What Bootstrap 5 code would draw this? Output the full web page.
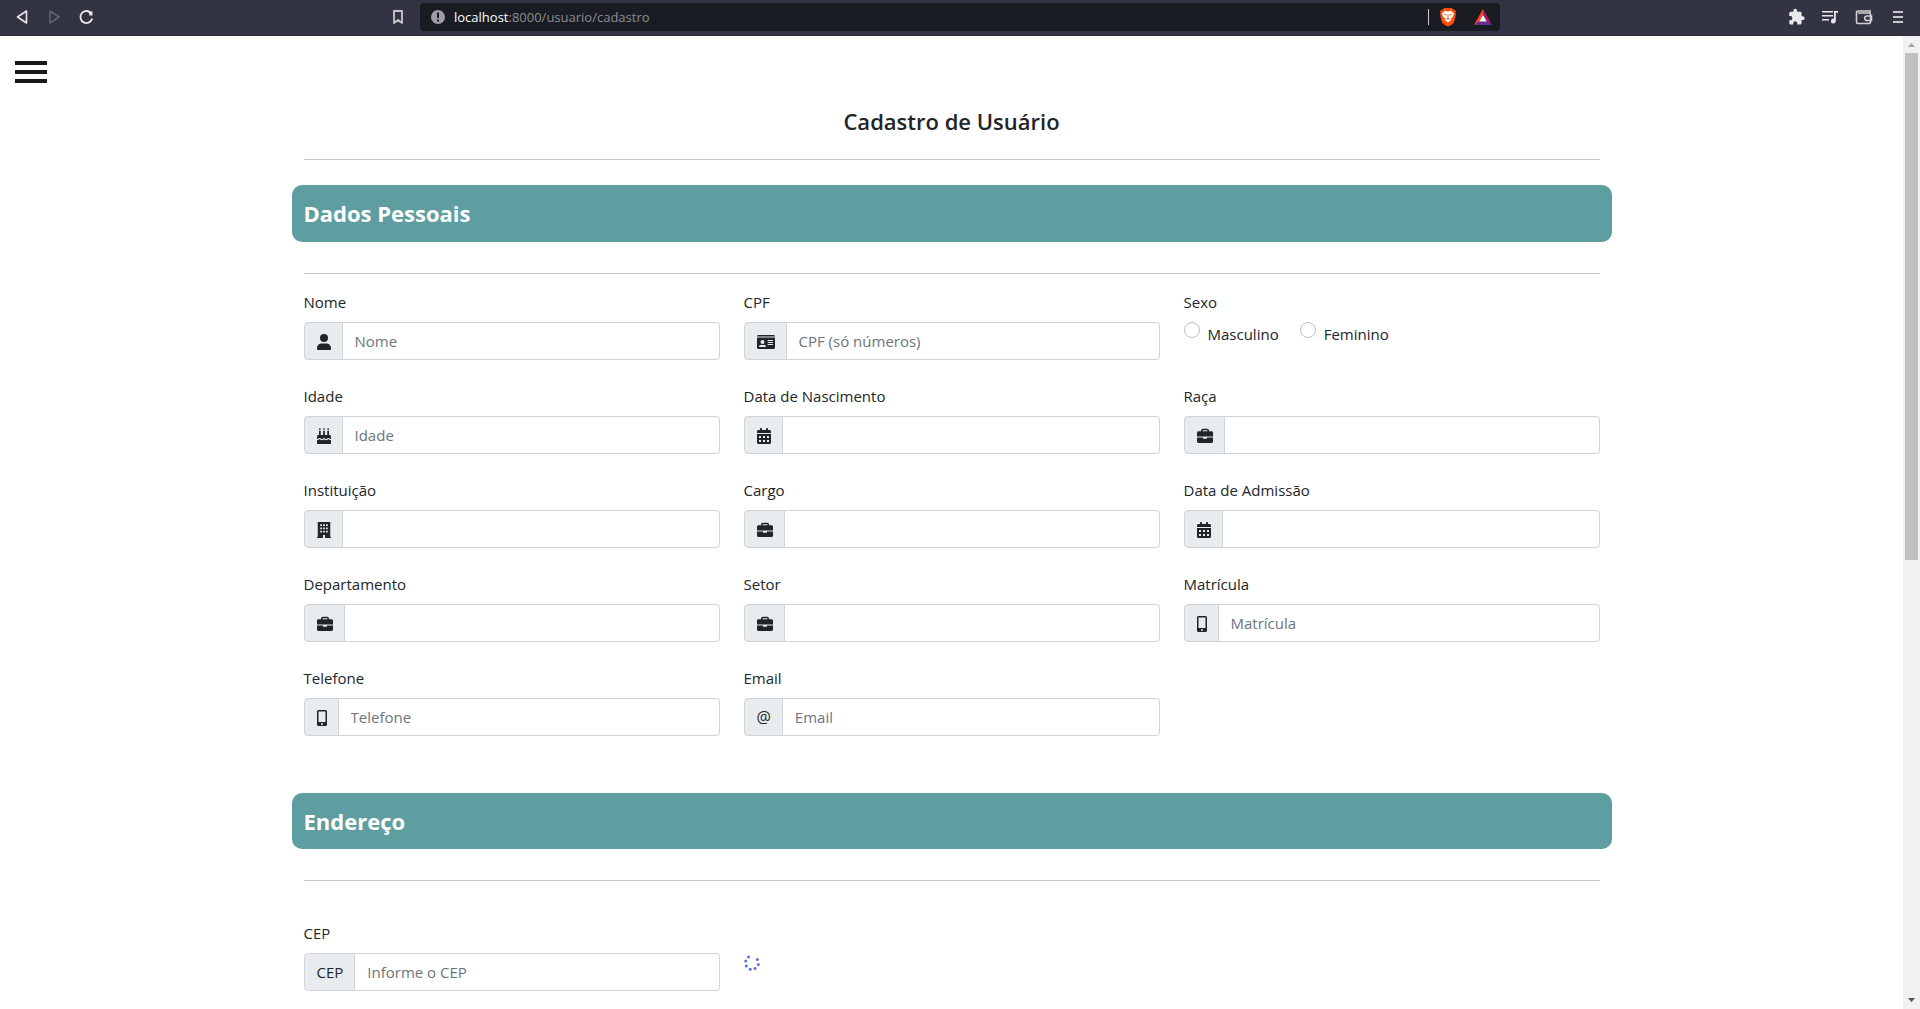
<!DOCTYPE html>
<html lang="pt-BR">
<head>
<meta charset="utf-8">
<meta name="viewport" content="width=device-width, initial-scale=1">
<title>Cadastro de Usuário</title>
<link href="https://cdn.jsdelivr.net/npm/bootstrap@5.3.0/dist/css/bootstrap.min.css" rel="stylesheet">
<style>
  body { font-family: "Open Sans", "Noto Sans", sans-serif; color: #212529; background: #fff; }
  .browser-bar { height: 36px; background: #323443; border-bottom: 1px solid #2b2c3b; padding-bottom: 1px; }
  .bar-btn { border: 0; background: none; padding: 0; color: #e8e8ea; display: flex; }
  .bar-left { width: 420px; padding-left: 14px; padding-right: 13px; }
  .bar-left .bar-btn { margin-right: 14px; }
  .bar-left .bar-btn:last-child { margin-right: 0; }
  .url-box { height: 28px; background: #191c23; border-radius: 4px; padding: 0 8px 0 10px; margin-right: 287px; }
  .url-host { color: #fff; }
  .url-text { font-size: 13px; line-height: 18px; color: #8c8e94; text-decoration: none; margin-left: 8px; }
  .url-sep { width: 1px; height: 16px; background: #c8c8ca; margin-right: 9px; }
  .bar-right { gap: 16px; padding-right: 13px; }
  .menu-btn { border: 0; background: none; padding: 25px 15px 0; display: block; }
  .menu-btn span { display: block; width: 32px; height: 4px; background: #1a1a1a; margin-bottom: 5px; }
  .menu-btn span:last-child { margin-bottom: 0; }
  .page-title { font-size: 22px; line-height: 29px; font-weight: 600; margin: 24px 0 0; }
  .rule { border: 0; border-top: 1px solid #c8c9ca; height: 0; opacity: 1; }
  .rule:not([size]) { height: 1px; background: none; }
  .title-rule { margin: 23px 0 25px; }
  .band-rule { margin: 31px 0 16px; }
  .section-band { background: #5f9ea0; color: #fff; border-radius: 10px; padding: 14px 12px; margin-left: -12px; margin-right: -12px; }
  .section-band h2 { font-size: 22px; line-height: 29px; font-weight: 700; margin: 0; }
  .address-band { margin-top: 57px; padding-bottom: 13px; }
  .address-fields { padding-top: 24px; }
  .loading-cell { padding-top: 34px; }
  .field-label { font-size: 15px; line-height: 24px; margin-bottom: 8px; display: block; }
  .input-group > .form-control, .input-group-text { font-size: 15px; line-height: 24px; color: #212529; border-color: #ced4da; }
  .input-group-text { background: #e9ecef; min-height: 38px; padding-right: 11px; }
  .input-group > .at-sign { font-size: 16px; }
  .form-control::placeholder { color: #6c757d; }
  .input-group > .form-control, .input-group > .input-group-text { border-radius: 4px; }
  .input-group > .input-group-text { border-top-right-radius: 0; border-bottom-right-radius: 0; }
  .input-group > .form-control { border-top-left-radius: 0; border-bottom-left-radius: 0; }
  .ico { fill: currentColor; height: 16px; display: block; margin-top: 2px; }
  .sex-option { gap: 8px; margin-right: 21px; }
  .sex-option .form-check-input { margin: 0; border-color: #bfbfbf; }
  .sex-option label { font-size: 15px; line-height: 24px; }
  .scroll-track { width: 17px; background: #f1f1f1; padding: 0 2px; }
  .scroll-end { height: 17px; }
  .scroll-thumb { height: 54%; background: #c1c1c1; }
</style>
<script src="https://cdn.jsdelivr.net/npm/bootstrap@5.3.0/dist/js/bootstrap.bundle.min.js"></script>
</head>
<body class="vh-100 d-flex flex-column overflow-hidden">

<svg class="d-none" xmlns="http://www.w3.org/2000/svg">
  <symbol id="i-user" viewBox="0 0 448 512"><path d="M224 256A128 128 0 1 0 224 0a128 128 0 0 0 0 256zM144 304C64 304 0 368 0 448v20c0 24 20 44 44 44h360c24 0 44-20 44-44v-20c0-80-64-144-144-144z"/></symbol>
  <symbol id="i-card" viewBox="0 0 576 512"><path fill-rule="evenodd" d="M0 80h576c0-27-21-48-48-48H48C21 32 0 53 0 80zm0 32v320c0 27 21 48 48 48h480c27 0 48-21 48-48V112zM64 405c0-29 24-53 53-53h118c29 0 53 24 53 53 0 6-5 11-11 11H75c-6 0-11-5-11-11zM176 192a64 64 0 1 1 0 128 64 64 0 0 1 0-128zm176 0h144a16 16 0 0 1 0 32H352a16 16 0 0 1 0-32zm0 64h144a16 16 0 0 1 0 32H352a16 16 0 0 1 0-32zm0 64h144a16 16 0 0 1 0 32H352a16 16 0 0 1 0-32z"/></symbol>
  <symbol id="i-cake" viewBox="0 0 448 512"><path d="M64 96v128H48c-27 0-48 21-48 48v80c20 0 30-8 44-18 24-18 52-18 76 0 30 22 44 22 74 0 20-14 40-14 60 0 30 22 44 22 74 0 24-18 52-18 76 0 14 10 24 18 44 18v-80c0-27-21-48-48-48h-16V96h-56v128h-76V96h-56v128h-76V96zM0 388v124h448V388c-28 0-46-8-62-20-14-9-26-9-40 0-44 30-72 30-112 0-8-6-14-6-22 0-40 30-68 30-112 0-14-9-26-9-40 0-16 12-32 20-60 20zM72 8h40v64H72zM204 8h40v64h-40zM336 8h40v64h-40z"/></symbol>
  <symbol id="i-calendar" viewBox="0 0 448 512"><path fill-rule="evenodd" d="M128 0c18 0 32 14 32 32v32h128V32a32 32 0 0 1 64 0v32h48c26 0 48 22 48 48v48H0v-48c0-26 22-48 48-48h48V32c0-18 14-32 32-32zM0 192h448v272c0 26-22 48-48 48H48c-26 0-48-22-48-48zm64 64v64h64v-64zm128 0v64h64v-64zm128 0v64h64v-64zM64 384v64h64v-64zm128 0v64h64v-64zm128 0v64h64v-64z"/></symbol>
  <symbol id="i-case" viewBox="0 0 512 512"><path fill-rule="evenodd" d="M184 72h144c4 0 8 4 8 8v24H176V80c0-4 4-8 8-8zm-56 8v24H48c-27 0-48 21-48 48v120h512V152c0-27-21-48-48-48h-80V80c0-31-25-56-56-56H184c-31 0-56 25-56 56zM512 304H320v24c0 9-7 16-16 16h-96c-9 0-16-7-16-16v-24H0v128c0 27 21 48 48 48h416c27 0 48-21 48-48z"/></symbol>
  <symbol id="i-building" viewBox="0 0 448 512"><path fill-rule="evenodd" d="M24 0h400v480h24v32H256v-96h-64v96H0v-32h24zM104 72v56h56V72zm92 0v56h56V72zm92 0v56h56V72zM104 176v56h56v-56zm92 0v56h56v-56zm92 0v56h56v-56zM104 280v56h56v-56zm92 0v56h56v-56zm92 0v56h56v-56z"/></symbol>
  <symbol id="i-mobile" viewBox="0 0 320 512"><path fill-rule="evenodd" d="M48 0h224c26 0 48 22 48 48v416c0 26-22 48-48 48H48c-26 0-48-22-48-48V48C0 22 22 0 48 0zm0 48v336h224V48zm112 368a32 32 0 1 0 0 64 32 32 0 0 0 0-64z"/></symbol>
</svg>

<header class="browser-bar d-flex align-items-center flex-shrink-0">
  <div class="bar-left d-flex align-items-center flex-shrink-0">
    <button class="bar-btn" type="button" aria-label="Voltar"><svg width="18" height="18" viewBox="0 0 18 18" fill="none" stroke="currentColor" stroke-width="1.600" stroke-linejoin="round"><path d="M12.500 3v12L3.500 9z"/></svg></button>
    <button class="bar-btn opacity-25" type="button" aria-label="Avançar"><svg width="18" height="18" viewBox="0 0 18 18" fill="none" stroke="currentColor" stroke-width="1.600" stroke-linejoin="round"><path d="M4 3v12l9-6z"/></svg></button>
    <button class="bar-btn" type="button" aria-label="Recarregar"><svg width="18" height="18" viewBox="0 0 18 18" fill="none" stroke="currentColor" stroke-width="1.800" stroke-linecap="round"><path d="M14 11.200A6 6 0 1 1 12 4.200"/><path d="M10.500 3.500h4V7.500h-3z" fill="currentColor" stroke="none"/></svg></button>
    <button class="bar-btn ms-auto" type="button" aria-label="Favoritos"><svg width="18" height="18" viewBox="0 0 18 18" fill="none" stroke="#c8c8cc" stroke-width="1.800" stroke-linejoin="round"><path d="M5 3h8v12l-4-3-4 3z"/></svg></button>
  </div>
  <div class="url-box d-flex align-items-center flex-grow-1">
    <svg width="16" height="16" viewBox="0 0 16 16"><circle cx="8" cy="8" r="7" fill="#9b9ca4"/><path d="M7 3.500h2V9H7zM7 10.500h2v2H7z" fill="#191c23"/></svg>
    <a class="url-text" href="#"><span class="url-host">localhost</span>:8000/usuario/cadastro</a>
    <span class="url-sep ms-auto"></span>
    <svg width="20" height="20" viewBox="0 0 20 20"><path d="M6.500 1h7l2 1.500 2 1 .3 3-.3 3-1.500 6-2 2L10 19.500 6 17.500l-2-2-1.500-6-.3-3 .3-3 2-1z" fill="#fb4f0a"/><path d="M10 4.500l3-.7 3 2.700-1 3-2 2 .3 1.500L10 15.500 6.700 13 7 11.500l-2-2-1-3L7 3.800z" fill="#fff"/><path d="M6.200 7.200l2.300.9M13.800 7.200l-2.300.9M10 7.500v3M8 12.300l2-1 2 1" stroke="#fb4f0a" fill="none"/></svg>
    <svg class="ms-3" width="18" height="18" viewBox="0 0 18 18"><path d="M9 1L0 17l5.500-3.500L9 7z" fill="#ff4724"/><path d="M9 1l9 16-5.500-3.500L9 7z" fill="#9e1f63"/><path d="M0 17h18l-5-3.500H5z" fill="#662d91"/><path d="M9 7l3.700 6.500H5.300z" fill="#fff"/></svg>
  </div>
  <div class="bar-right d-flex align-items-center">
    <button class="bar-btn" type="button" aria-label="Extensões"><svg width="18" height="18" viewBox="0 0 24 24" fill="currentColor"><path d="M21 11H19.500V7c0-1.100-.9-2-2-2h-4V3.500a2.500 2.500 0 0 0-5 0V5H5c-1.100 0-2 .9-2 2v3.800h1.500a2.700 2.700 0 0 1 0 5.400H3V20c0 1.100.9 2 2 2h3.300v-1.500a2.700 2.700 0 0 1 5.400 0V22H17.500c1.100 0 2-.9 2-2v-4H21a2.500 2.500 0 0 0 0-5z"/></svg></button>
    <button class="bar-btn" type="button" aria-label="Lista de reprodução"><svg width="18" height="18" viewBox="0 0 18 18" fill="currentColor"><path d="M1 3h11v1.500H1zM1 7h11v1.500H1zM1 11h7v1.500H1zM13 3h4v1.700h-2.200V13a2.400 2.400 0 1 1-1.800-2.300z"/></svg></button>
    <button class="bar-btn" type="button" aria-label="Carteira"><svg width="18" height="18" viewBox="0 0 18 18" fill="none" stroke="#d0d0d4" stroke-width="1.600"><path d="M15 5V3H3a1.500 1.500 0 0 0-1.500 1.500V14A1.500 1.500 0 0 0 3 15.500h11A1.500 1.500 0 0 0 15.500 14V6.500A1.500 1.500 0 0 0 14 5H3M16.500 8H12a2.200 2.200 0 0 0 0 4.500h4.500z"/></svg></button>
    <button class="bar-btn" type="button" aria-label="Menu"><svg width="18" height="18" viewBox="0 0 18 18" fill="#c8c8cc"><path d="M4 3h10v2H4zM4 8h10v2H4zM4 13h10v2H4z"/></svg></button>
  </div>
</header>

<div class="d-flex flex-grow-1 overflow-hidden">
  <main class="flex-grow-1">
    <button class="menu-btn" type="button" aria-label="Abrir menu"><span></span><span></span><span></span></button>
    <form class="container-xxl">
      <h1 class="page-title text-center">Cadastro de Usuário</h1>
      <hr class="rule title-rule">
      <div class="section-band"><h2>Dados Pessoais</h2></div>
      <hr class="rule band-rule">
      <div class="row gy-4">
        <div class="col-4"><label class="field-label" for="nome">Nome</label><div class="input-group"><span class="input-group-text"><svg class="ico" width="14"><use href="#i-user"/></svg></span><input class="form-control" id="nome" type="text" placeholder="Nome"></div></div>
        <div class="col-4"><label class="field-label" for="cpf">CPF</label><div class="input-group"><span class="input-group-text"><svg class="ico" width="18"><use href="#i-card"/></svg></span><input class="form-control" id="cpf" type="text" placeholder="CPF (só números)"></div></div>
        <div class="col-4"><span class="field-label">Sexo</span>
          <div class="d-flex">
            <div class="sex-option d-flex"><input class="form-check-input" type="radio" name="sexo" id="masc"><label for="masc">Masculino</label></div>
            <div class="sex-option d-flex"><input class="form-check-input" type="radio" name="sexo" id="fem"><label for="fem">Feminino</label></div>
          </div>
        </div>
        <div class="col-4"><label class="field-label" for="idade">Idade</label><div class="input-group"><span class="input-group-text"><svg class="ico" width="14"><use href="#i-cake"/></svg></span><input class="form-control" id="idade" type="text" placeholder="Idade"></div></div>
        <div class="col-4"><label class="field-label" for="nasc">Data de Nascimento</label><div class="input-group"><span class="input-group-text"><svg class="ico" width="14"><use href="#i-calendar"/></svg></span><input class="form-control" id="nasc" type="text"></div></div>
        <div class="col-4"><label class="field-label" for="raca">Raça</label><div class="input-group"><span class="input-group-text"><svg class="ico" width="16"><use href="#i-case"/></svg></span><input class="form-control" id="raca" type="text"></div></div>
        <div class="col-4"><label class="field-label" for="inst">Instituição</label><div class="input-group"><span class="input-group-text"><svg class="ico" width="14"><use href="#i-building"/></svg></span><input class="form-control" id="inst" type="text"></div></div>
        <div class="col-4"><label class="field-label" for="cargo">Cargo</label><div class="input-group"><span class="input-group-text"><svg class="ico" width="16"><use href="#i-case"/></svg></span><input class="form-control" id="cargo" type="text"></div></div>
        <div class="col-4"><label class="field-label" for="adm">Data de Admissão</label><div class="input-group"><span class="input-group-text"><svg class="ico" width="14"><use href="#i-calendar"/></svg></span><input class="form-control" id="adm" type="text"></div></div>
        <div class="col-4"><label class="field-label" for="depto">Departamento</label><div class="input-group"><span class="input-group-text"><svg class="ico" width="16"><use href="#i-case"/></svg></span><input class="form-control" id="depto" type="text"></div></div>
        <div class="col-4"><label class="field-label" for="setor">Setor</label><div class="input-group"><span class="input-group-text"><svg class="ico" width="16"><use href="#i-case"/></svg></span><input class="form-control" id="setor" type="text"></div></div>
        <div class="col-4"><label class="field-label" for="matr">Matrícula</label><div class="input-group"><span class="input-group-text"><svg class="ico" width="10"><use href="#i-mobile"/></svg></span><input class="form-control" id="matr" type="text" placeholder="Matrícula"></div></div>
        <div class="col-4"><label class="field-label" for="tel">Telefone</label><div class="input-group"><span class="input-group-text"><svg class="ico" width="10"><use href="#i-mobile"/></svg></span><input class="form-control" id="tel" type="text" placeholder="Telefone"></div></div>
        <div class="col-4"><label class="field-label" for="email">Email</label><div class="input-group"><span class="input-group-text at-sign">@</span><input class="form-control" id="email" type="email" placeholder="Email"></div></div>
      </div>
      <div class="section-band address-band"><h2>Endereço</h2></div>
      <hr class="rule band-rule">
      <div class="row address-fields">
        <div class="col-4"><label class="field-label" for="cep">CEP</label><div class="input-group"><span class="input-group-text">CEP</span><input class="form-control" id="cep" type="text" placeholder="Informe o CEP"></div></div>
        <div class="col-4 loading-cell"><svg class="d-block" width="16" height="16" viewBox="0 0 16 16" fill="#5a70dc" role="img" aria-label="Carregando"><circle cx="4.500" cy="2" r="1.500"/><circle cx="1.700" cy="6" r="1.500"/><circle cx="2.300" cy="11" r="1.500"/><circle cx="6.200" cy="14.200" r="1.500"/><circle cx="11" cy="13.500" r="1.500"/><circle cx="14.300" cy="9.500" r="1.500"/><circle cx="13.300" cy="4.500" r="1.500"/></svg></div>
      </div>
    </form>
  </main>
  <div class="scroll-track d-flex flex-column flex-shrink-0" aria-hidden="true">
    <svg class="scroll-end" width="13" viewBox="0 0 13 17"><path d="M3 11h7L6.500 7z" fill="#a3a3a3"/></svg>
    <div class="flex-grow-1"><div class="scroll-thumb"></div></div>
    <svg class="scroll-end" width="13" viewBox="0 0 13 17"><path d="M3 6h7l-3.500 4z" fill="#505050"/></svg>
  </div>
</div>
</body>
</html>
